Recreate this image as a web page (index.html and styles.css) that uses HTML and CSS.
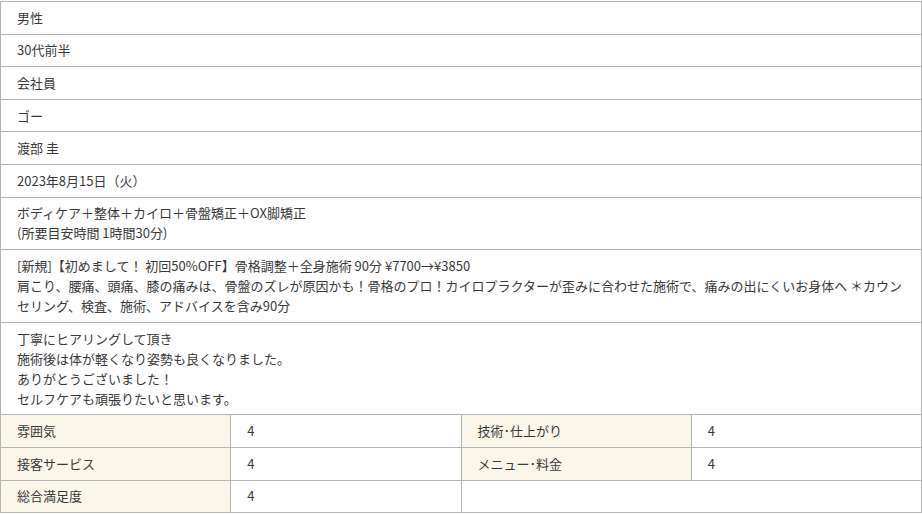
FILE: index.html
```html
<!DOCTYPE html>
<html lang="ja">
<head>
<meta charset="utf-8">
<title>口コミ詳細</title>
<link rel="stylesheet" href="styles.css">
</head>
<body>
<table class="review">
  <colgroup>
    <col class="c"><col class="c"><col class="c"><col class="c">
  </colgroup>
  <tbody>
    <tr><td colspan="4">男性</td></tr>
    <tr><td colspan="4">30代前半</td></tr>
    <tr><td colspan="4">会社員</td></tr>
    <tr><td colspan="4">ゴー</td></tr>
    <tr><td colspan="4">渡部 圭</td></tr>
    <tr><td colspan="4">2023年8月15日（火）</td></tr>
    <tr><td colspan="4">ボディケア＋整体＋カイロ＋骨盤矯正＋OX脚矯正<br>(所要目安時間 1時間30分)</td></tr>
    <tr><td colspan="4">[新規]【初めまして！ 初回50%OFF】骨格調整＋全身施術 90分 ¥7700→¥3850<br>肩こり、腰痛、頭痛、膝の痛みは、骨盤のズレが原因かも！骨格のプロ！カイロプラクターが歪みに合わせた施術で、痛みの出にくいお身体へ ＊カウン<br>セリング、検査、施術、アドバイスを含み90分</td></tr>
    <tr><td colspan="4">丁寧にヒアリングして頂き<br>施術後は体が軽くなり姿勢も良くなりました。<br>ありがとうございました！<br>セルフケアも頑張りたいと思います。</td></tr>
    <tr><th>雰囲気</th><td>4</td><th>技術･仕上がり</th><td>4</td></tr>
    <tr><th>接客サービス</th><td>4</td><th>メニュー･料金</th><td>4</td></tr>
    <tr><th>総合満足度</th><td>4</td><td colspan="2"></td></tr>
  </tbody>
</table>
</body>
</html>
```

FILE: styles.css
```css
html, body {
  margin: 0;
  padding: 0;
  background: #ffffff;
}
body {
  padding-top: 1px;
  font-family: "Noto Sans CJK JP", "Noto Sans", sans-serif;
  font-size: 13px;
  color: #3a3a3a;
}
.review {
  width: 922px;
  border-collapse: collapse;
  table-layout: fixed;
}
.review .c {
  width: 25%;
}
.review th,
.review td {
  border: 1px solid #b4b4b4;
  padding: 5.8px 4px 5.8px 16px;
  line-height: 20px;
  text-align: left;
  vertical-align: middle;
  font-weight: normal;
  white-space: nowrap;
  overflow: hidden;
}
.review th {
  background: #faf6ea;
}
```
